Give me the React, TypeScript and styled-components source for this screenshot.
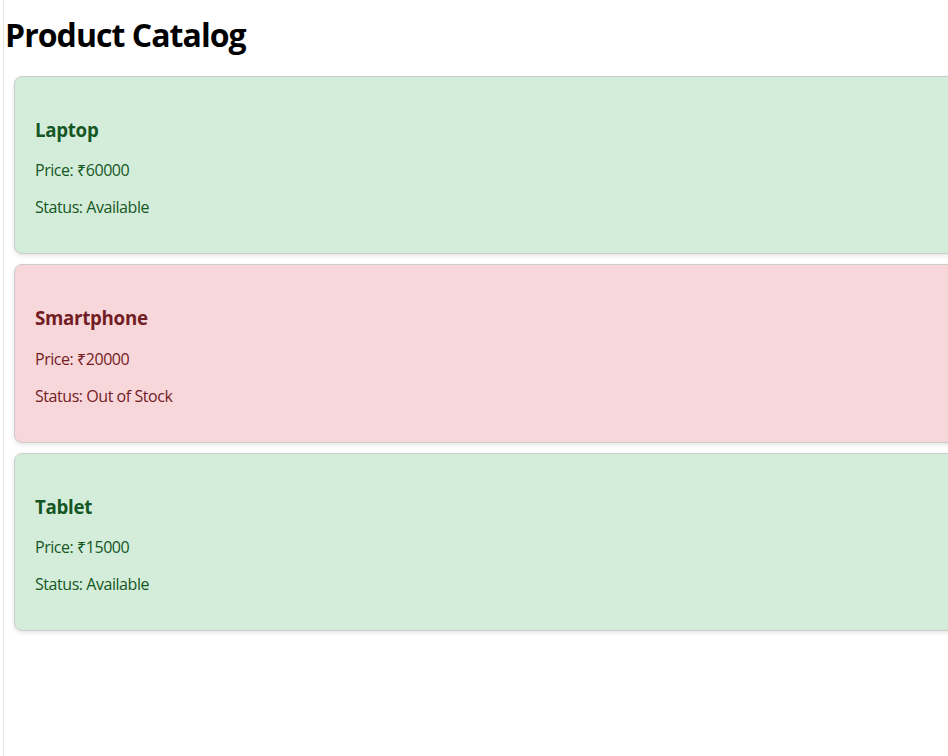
import React from "react";
import styled, { createGlobalStyle } from "styled-components";

const Global = createGlobalStyle`
  html, body { margin: 0; padding: 0; overflow: hidden; background: #fff; }
  body { font-family: "Open Sans", "Noto Sans", sans-serif; }
`;

const Page = styled.div`
  margin-left: 3px;
  border-left: 1px solid #e6e6e6;
  min-height: 756px;
  width: 1000px;
  box-sizing: border-box;
`;

const Title = styled.h1`
  font-size: 32px;
  line-height: 40px;
  font-weight: 700;
  color: #000;
  margin: 0;
  padding: 15px 0 21px 1px;
  letter-spacing: -0.95px;
`;

const List = styled.div`
  display: flex;
  flex-direction: column;
  gap: 10px;
  padding-left: 10px;
`;

const Card = styled.div<{ $available: boolean }>`
  border: 1px solid #cccccc;
  border-radius: 8px;
  padding: 22px 20px 19px;
  background: ${(p) => (p.$available ? "#d4edda" : "#f8d7da")};
  color: ${(p) => (p.$available ? "#155724" : "#721c24")};
  box-shadow: 0 2px 4px rgba(0, 0, 0, 0.1);
`;

const Name = styled.h3`
  font-size: 18.72px;
  font-weight: 700;
  line-height: 24px;
  margin: 18.72px 0;
  letter-spacing: -0.3px;
`;

const Line = styled.p`
  font-size: 16px;
  line-height: 21px;
  margin: 16px 0;
  letter-spacing: -0.45px;
`;

const products = [
  { name: "Laptop", price: 60000, available: true },
  { name: "Smartphone", price: 20000, available: false },
  { name: "Tablet", price: 15000, available: true },
];

export default function App() {
  return (
    <>
      <Global />
      <Page>
        <Title>Product Catalog</Title>
        <List>
          {products.map((p) => (
            <Card key={p.name} $available={p.available}>
              <Name>{p.name}</Name>
              <Line>Price: ₹{p.price}</Line>
              <Line>Status: {p.available ? "Available" : "Out of Stock"}</Line>
            </Card>
          ))}
        </List>
      </Page>
    </>
  );
}
